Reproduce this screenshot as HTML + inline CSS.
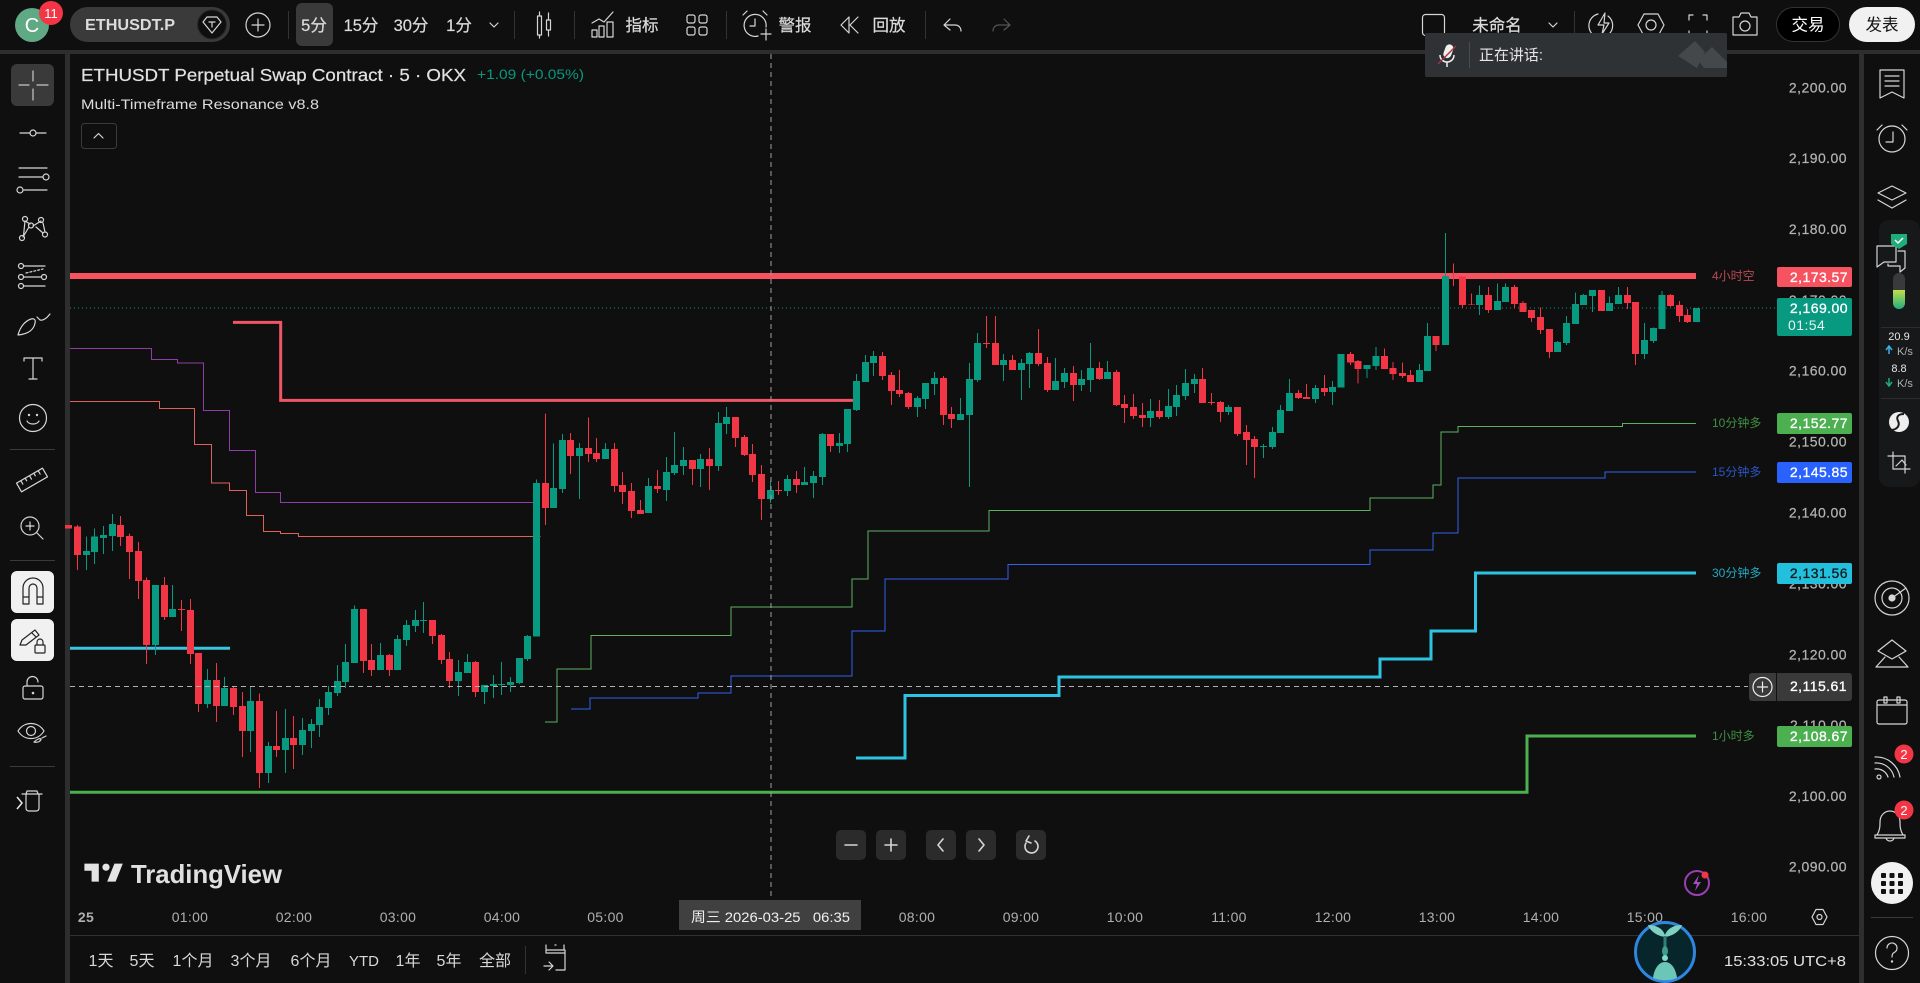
<!DOCTYPE html>
<html lang="zh"><head><meta charset="utf-8"><title>ETHUSDT</title>
<style>
html,body{margin:0;padding:0;background:#0f0f0f;overflow:hidden;width:1920px;height:983px}
svg{display:block;font-family:"Liberation Sans","Noto Sans CJK SC",sans-serif}
.ic{fill:none;stroke:#d6d6d6;stroke-width:1.2;stroke-linecap:round;stroke-linejoin:round}
.tb{fill:#dcdcdc;font-size:16.5px;text-anchor:middle;stroke:#dcdcdc;stroke-width:.2}
.pr{fill:#b4b4b4;font-size:14px;text-anchor:end;letter-spacing:.45px;stroke:#b4b4b4;stroke-width:.2}
.lb{fill:#fff;font-size:14px;text-anchor:end;letter-spacing:.45px;stroke:#fff;stroke-width:.3}
.tm{fill:#b0b0b0;font-size:14px;text-anchor:middle;letter-spacing:.3px}
.rg{fill:#d8d8d8;font-size:16px;text-anchor:middle}
.sm{font-size:12px}
.cr{shape-rendering:crispEdges}
</style></head><body>
<svg width="1920" height="983" viewBox="0 0 1920 983" xmlns="http://www.w3.org/2000/svg">
<rect width="1920" height="983" fill="#0f0f0f"/>
<!-- frame dividers -->
<rect x="0" y="50" width="1920" height="4" fill="#2e2e2e"/>
<rect x="65" y="54" width="5" height="929" fill="#2e2e2e"/>
<rect x="1859" y="54" width="5" height="929" fill="#2e2e2e"/>
<rect x="70" y="935" width="1789" height="1" fill="#303030"/>

<!-- indicator lines -->
<rect x="70" y="273" width="1626" height="6" fill="#f7525f"/>
<path class="cr" d="M70 308H1777" stroke="#089981" stroke-width="1" stroke-dasharray="1 3" fill="none"/>
<g transform="translate(70 310) scale(.33333)" fill="none">
<path class="cr" d="M0 116H244V149H322V159H400V301H478V421H556V547H632V577H1410" stroke="#8f3ea5" stroke-width="3"/>
<path class="cr" d="M0 274H268V295H373V403H424V519H478V541H529V616H580V664H632V670H686V679H1412" stroke="#e0605c" stroke-width="3"/>
<path d="M489 37H632V271H2349" stroke="#ee5565" stroke-width="9"/>
</g>
<g fill="none">
<path d="M70 648.3H230" stroke="#3cc3e0" stroke-width="3"/>
<path class="cr" d="M545 722H557V669H591V635.500H731V607H852V579H868V531H989V510.500H1370V498H1433V485H1441V432H1458V426.700H1622.500V423.300H1696" stroke="#5cb160" stroke-width="1"/>
<path class="cr" d="M571 709H590V698H698V693H731V676H852V631H885V579H1008V564.500H1370V550H1433V533H1458V478H1605V472H1696" stroke="#2f62ee" stroke-width="1"/>
<path d="M856 758H905V695.500H1059V677H1380V659H1431V631H1475.500V573H1696" stroke="#2cc4e0" stroke-width="3"/>
<path d="M70 792.300H1527V736H1696" stroke="#4caf50" stroke-width="3"/>
</g>

<!-- candles A -->
<g class="cr" transform="translate(70 480) scale(.33333)" fill="none">
<path stroke="#f23645" stroke-width="3" d="M22 135V270M151 108V198M178 160V297M205 186V357M230 292V552M284 291V420M334 360V453M361 357V552M385 519V696M439 549V726M490 620V705M517 636V831M568 640V924M620 693V831M670 708V867M880 387V579M904 492V588M958 522V588M1087 420V492M1114 462V552M1138 516V624M1216 543V651"/>
<path stroke="#f23645" stroke-width="21" d="M-5 135V145M22 140V225M151 135V171M178 168V216M205 213V303M230 300V495M284 315V411M334 387V390M361 390V522M385 519V672M439 600V678M490 624V681M517 678V753M568 663V879M620 798V810M670 774V795M880 387V543M904 540V570M958 525V570M1087 420V468M1114 465V540M1138 537V603M1216 546V636"/>
<path stroke="#089981" stroke-width="3" d="M49 170V270M74 145V252M100 138V222M127 102V213M257 315V525M307 315V411M412 567V684M463 591V678M541 618V816M595 786V909M646 687V879M697 714V825M724 717V804M748 657V771M775 618V705M802 555V648M826 492V624M853 376V549M931 489V570M982 465V570M1009 420V498M1036 390V456M1060 366V459M1165 540V648M1192 522V579M1243 615V672M1270 585V654M1294 546V645M1321 591V636M1348 534V612M1372 465V543"/>
<path stroke="#089981" stroke-width="21" d="M49 213V225M74 170V216M100 165V174M127 132V168M257 315V495M307 387V411M412 600V672M463 624V678M541 663V753M595 798V879M646 774V810M697 750V795M724 732V753M748 681V735M775 636V684M802 603V639M826 546V606M853 387V549M931 525V570M982 477V570M1009 435V480M1036 420V438M1060 420V423M1165 576V603M1192 546V579M1243 615V636M1270 612V618M1294 612V615M1321 606V615M1348 534V609M1372 468V537"/>
</g>
<!-- candles B -->
<g class="cr" transform="translate(530 400) scale(.33333)" fill="none">
<path stroke="#f23645" stroke-width="3" d="M46 40V375M121 99V222M175 52V186M200 114V186M253 129V276M278 216V312M305 249V354M332 300V342M382 210V279M487 180V255M538 144V270M616 51V141M643 105V168M667 132V246M694 195V360M745 243V285M799 213V279M902 102V156"/>
<path stroke="#f23645" stroke-width="21" d="M46 249V324M121 120V168M175 144V162M200 159V177M253 147V258M278 255V276M305 273V333M332 330V342M382 258V267M487 180V207M538 177V198M616 51V114M643 111V165M667 162V225M694 222V297M745 270V273M799 237V255M902 102V138"/>
<path stroke="#089981" stroke-width="3" d="M19 238V710M70 130V324M97 102V279M148 129V297M226 129V177M355 234V339M409 171V303M433 96V225M460 141V225M512 162V261M565 36V213M590 21V102M721 243V309M772 225V288M823 201V255M850 213V294M877 99V255M928 99V159"/>
<path stroke="#089981" stroke-width="21" d="M19 249V710M70 264V324M97 120V267M148 144V168M226 147V177M355 258V339M409 216V270M433 195V219M460 180V198M512 177V207M565 69V198M590 51V72M721 270V297M772 237V273M823 246V255M850 228V249M877 102V231M928 129V138"/>
</g>
<!-- candles C -->
<g class="cr" transform="translate(840 300) scale(.33333)" fill="none">
<path stroke="#f23645" stroke-width="3" d="M127 156V240M154 216V315M178 210V291M205 276V327M310 228V375M334 321V384M439 48V144M466 48V195M517 165V210M595 87V198M622 171V276M700 198V303M778 186V240M829 210V318M853 285V369M880 282V357M907 309V381M958 300V357M1087 204V309M1114 279V315M1141 303V366M1192 321V408M1219 375V495M1243 408V534M1375 270V297M1399 252V297M1453 225V288"/>
<path stroke="#f23645" stroke-width="21" d="M127 168V228M154 225V273M178 270V282M205 279V321M310 234V345M334 342V357M439 129V132M466 129V195M517 180V210M595 159V192M622 189V270M700 219V255M778 204V237M829 216V315M853 312V324M880 321V348M907 345V354M958 333V351M1087 237V309M1114 306V309M1141 306V336M1192 321V402M1219 396V420M1243 417V441M1375 279V294M1399 291V297M1453 264V276"/>
<path stroke="#089981" stroke-width="3" d="M22 327V456M49 222V333M76 165V246M100 153V228M232 288V351M256 249V327M283 216V285M361 294V360M388 189V561M412 99V246M490 162V243M544 177V300M568 156V264M646 174V270M673 204V264M724 210V273M751 129V276M802 183V237M931 297V381M985 267V357M1009 255V348M1036 207V300M1063 222V279M1165 315V345M1270 432V474M1297 381V447M1321 315V399M1348 237V333M1426 255V309M1477 243V315"/>
<path stroke="#089981" stroke-width="21" d="M22 327V432M49 243V330M76 186V246M100 168V189M232 294V321M256 249V297M283 234V252M361 342V360M388 237V345M412 129V240M490 180V195M544 189V210M568 159V192M646 243V270M673 219V246M724 237V255M751 204V240M802 216V237M931 333V354M985 318V351M1009 285V321M1036 249V288M1063 237V252M1165 321V336M1270 438V441M1297 396V441M1321 330V399M1348 279V333M1426 264V297M1477 261V276"/>
</g>
<!-- candles D -->
<g class="cr" transform="translate(1300 220) scale(.35714 .33333)" fill="none">
<path stroke="#f23645" stroke-width="2.800" d="M141 396V435M163 420V491M236 385V447M261 426V480M287 427V474M310 450V486M381 348V393M430 130V198M455 170V264M480 220V255M528 201V279M600 195V264M625 243V276M648 270V306M674 262V342M698 327V414M844 210V273M917 201V267M940 246V435M1037 222V261M1062 243V306M1085 267V309"/>
<path stroke="#f23645" stroke-width="19.600" d="M141 402V427M163 423V447M236 408V447M261 444V462M287 459V468M310 465V486M381 348V375M455 170V255M480 253V255M528 225V270M600 201V252M625 249V276M648 270V294M674 291V330M698 327V396M844 210V273M917 225V249M940 246V402M1037 225V258M1062 255V288M1085 285V306"/>
<path stroke="#089981" stroke-width="2.800" d="M115 402V503M188 435V474M213 381V450M334 432V486M357 309V453M407 39V375M503 197V285M553 190V270M575 190V246M721 363V396M746 288V375M771 217V312M794 222V255M819 210V276M867 230V273M892 201V252M964 309V417M990 322V369M1013 213V327M1110 264V306"/>
<path stroke="#089981" stroke-width="19.600" d="M115 402V503M188 435V447M213 408V438M334 450V486M357 348V453M407 168V375M503 225V255M553 243V270M575 201V246M721 366V396M746 309V369M771 252V312M794 225V255M819 210V228M867 249V273M892 225V252M964 360V402M990 324V363M1013 225V327M1110 264V306"/>
</g>

<!-- crosshair -->
<path class="cr" d="M771 54V898" stroke="#a0a0a0" stroke-width="1" stroke-dasharray="5 4" fill="none"/>
<path class="cr" d="M70 686.700H1748" stroke="#b0b0b0" stroke-width="1" stroke-dasharray="5 4" fill="none"/>

<!-- legend -->
<text x="81" y="81" font-size="17.500" fill="#e2e2e2" stroke="#e2e2e2" stroke-width=".2" textLength="385" lengthAdjust="spacingAndGlyphs">ETHUSDT Perpetual Swap Contract · 5 · OKX</text>
<text x="477" y="79" font-size="14" fill="#089981" textLength="107" lengthAdjust="spacingAndGlyphs">+1.09 (+0.05%)</text>
<text x="81" y="109" font-size="14" fill="#dcdcdc" textLength="238" lengthAdjust="spacingAndGlyphs">Multi-Timeframe Resonance v8.8</text>
<rect x="81.500" y="123.500" width="35" height="25" rx="3" fill="none" stroke="#3a3a3a"/>
<path d="M94 138l4.500-4.500l4.500 4.500" class="ic"/>

<!-- price axis -->
<g>
<text class="pr" x="1847" y="92.500">2,200.00</text>
<text class="pr" x="1847" y="163">2,190.00</text>
<text class="pr" x="1847" y="234">2,180.00</text>
<text class="pr" x="1847" y="305">2,170.00</text>
<text class="pr" x="1847" y="375.500">2,160.00</text>
<text class="pr" x="1847" y="446.500">2,150.00</text>
<text class="pr" x="1847" y="517.500">2,140.00</text>
<text class="pr" x="1847" y="588.500">2,130.00</text>
<text class="pr" x="1847" y="659.500">2,120.00</text>
<text class="pr" x="1847" y="730">2,110.00</text>
<text class="pr" x="1847" y="801">2,100.00</text>
<text class="pr" x="1847" y="871.500">2,090.00</text>
</g>
<!-- right side labels -->
<text class="sm" x="1712" y="280" fill="#b84a56">4小时空</text>
<text class="sm" x="1712" y="427" fill="#3f8f42">10分钟多</text>
<text class="sm" x="1712" y="476" fill="#2c54c4">15分钟多</text>
<text class="sm" x="1712" y="577" fill="#22a8c0">30分钟多</text>
<text class="sm" x="1712" y="740" fill="#3f8f42">1小时多</text>

<rect x="1777" y="267" width="75" height="20" rx="2" fill="#f7525f"/><text class="lb" x="1848" y="282">2,173.57</text>
<rect x="1777" y="298" width="75" height="38" rx="2" fill="#089981"/><text class="lb" x="1848" y="313">2,169.00</text><text x="1788" y="330" fill="#e6f5f0" font-size="14" letter-spacing=".45">01:54</text>
<rect x="1777" y="413" width="75" height="21" rx="2" fill="#4caf50"/><text class="lb" x="1848" y="428">2,152.77</text>
<rect x="1777" y="462" width="75" height="21" rx="2" fill="#2962ff"/><text class="lb" x="1848" y="477">2,145.85</text>
<rect x="1777" y="563" width="75" height="21" rx="2" fill="#22c0dd"/><text class="lb" x="1848" y="578" style="fill:#0f1a1e;stroke:#0f1a1e">2,131.56</text>
<rect x="1749" y="673" width="103" height="28" rx="3" fill="#3a3a3a"/><rect x="1776" y="673" width="1" height="28" fill="#111"/>
<text class="lb" x="1847" y="691">2,115.61</text>
<circle cx="1762.500" cy="687" r="9.500" class="ic" style="stroke:#eee"/><path d="M1762.500 682v10M1757.500 687h10" class="ic" style="stroke:#eee"/>
<rect x="1777" y="726" width="75" height="21" rx="2" fill="#4caf50"/><text class="lb" x="1848" y="741">2,108.67</text>

<!-- time axis -->
<text class="tm" x="86" y="922" style="font-weight:700">25</text>
<text class="tm" x="190" y="922">01:00</text><text class="tm" x="294" y="922">02:00</text><text class="tm" x="398" y="922">03:00</text><text class="tm" x="502" y="922">04:00</text><text class="tm" x="605.500" y="922">05:00</text>
<text class="tm" x="917" y="922">08:00</text><text class="tm" x="1021" y="922">09:00</text><text class="tm" x="1125" y="922">10:00</text><text class="tm" x="1229" y="922">11:00</text><text class="tm" x="1333" y="922">12:00</text><text class="tm" x="1437" y="922">13:00</text><text class="tm" x="1541" y="922">14:00</text><text class="tm" x="1645" y="922">15:00</text><text class="tm" x="1749" y="922">16:00</text>
<rect x="679" y="900" width="182" height="30" fill="#404040"/>
<text x="691" y="922" font-size="14" fill="#f0f0f0" textLength="159" lengthAdjust="spacingAndGlyphs" xml:space="preserve">周三 2026-03-25   06:35</text>
<path class="ic" d="M1812 917l4-7.500h7l4 7.500l-4 7.500h-7z"/><circle class="ic" cx="1819.500" cy="917" r="2.500"/>

<!-- zoom buttons -->
<g fill="#2b2b2b"><rect x="836" y="830" width="30" height="30" rx="5"/><rect x="876" y="830" width="30" height="30" rx="5"/><rect x="926" y="830" width="30" height="30" rx="5"/><rect x="966" y="830" width="30" height="30" rx="5"/><rect x="1016" y="830" width="30" height="30" rx="5"/></g>
<g class="ic" style="stroke-width:1.600"><path d="M845 845h12M885 845h12M891 839v12M943 839l-5 6l5 6M979 839l5 6l-5 6"/><path d="M1035 841a6.500 6.500 0 1 1-9 2M1029 836l-3 5l5 2"/></g>

<!-- TradingView logo -->
<g transform="translate(82 860) scale(1.200)" fill="#e4e4e4"><path d="M14 3H2v6h6v9h6V3z"/><path d="M28 18h-7l6-15h7l-6 15z"/><circle cx="20" cy="6" r="3"/></g>
<text x="131" y="883" font-size="26" font-weight="700" fill="#e0e0e0" textLength="151" lengthAdjust="spacingAndGlyphs">TradingView</text>

<!-- purple power -->
<circle cx="1697" cy="883" r="12" fill="none" stroke="#9a3fb5" stroke-width="2"/>
<path d="M1699 875l-6 9h4l-2 7l6-9h-4z" fill="#a44bc0"/>
<circle cx="1705" cy="875" r="3.500" fill="#f23645"/>

<!-- bottom bar -->
<g class="rg"><text x="101" y="966">1天</text><text x="142" y="966">5天</text><text x="193" y="966">1个月</text><text x="251" y="966">3个月</text><text x="311" y="966">6个月</text><text x="364" y="966" font-size="15">YTD</text><text x="408" y="966">1年</text><text x="449" y="966">5年</text><text x="495" y="966">全部</text></g>
<rect x="525" y="946" width="1" height="28" fill="#333"/>
<g class="ic"><path d="M546 953V950H565V970H556M546 949v-4M564 949v-4M555 945h1M546 953h19M544 966h8M549 962l4 4l-4 4"/></g>
<text x="1846" y="966" font-size="15" fill="#e0e0e0" text-anchor="end" textLength="122" lengthAdjust="spacingAndGlyphs">15:33:05 UTC+8</text>

<!-- bottom avatar -->
<circle cx="1665" cy="952" r="29.500" fill="#07262b" stroke="#2f86e0" stroke-width="3"/>
<path d="M1665 935c-3-8-11-10-17-10c2 6 9 11 17 12c8-1 15-6 17-12c-6 0-14 2-17 10z" fill="#7fcfc2"/>
<path d="M1665 936v22" stroke="#2f7f78" stroke-width="3"/>
<ellipse cx="1665" cy="951" rx="3" ry="5" fill="#3f9a90"/>
<circle cx="1665" cy="958" r="3" fill="#7fd8c8"/>
<path d="M1653 978c1-8 5-16 12-16s11 8 12 16c-8 3-16 3-24 0z" fill="#6cc6b8"/>

<!-- TOP BAR -->
<circle cx="32" cy="25" r="17" fill="#5fa985"/>
<text x="32" y="32" font-size="20" fill="#fff" text-anchor="middle">C</text>
<circle cx="51" cy="13" r="12" fill="#f23645"/>
<text x="51" y="18" font-size="13" fill="#fff" text-anchor="middle">11</text>
<rect x="70" y="7" width="160" height="35" rx="17.500" fill="#3a3a3a"/>
<text x="85" y="30" font-size="15.500" font-weight="700" fill="#dcdcdc" textLength="90" lengthAdjust="spacingAndGlyphs">ETHUSDT.P</text>
<circle cx="212" cy="24.500" r="14.500" fill="#0f0f0f" stroke="#2a2a2a"/>
<g transform="translate(212 25)" class="ic"><path d="M-9 -3l4-5h10l4 5l-9 11z"/><path d="M-3 -3h6M0 -3v5"/></g>
<circle cx="258" cy="25" r="12" class="ic"/><path class="ic" d="M258 19v12M252 25h12"/>
<g fill="#333"><rect x="288" y="11" width="1" height="28"/><rect x="514" y="11" width="1" height="28"/><rect x="574" y="11" width="1" height="28"/><rect x="726" y="11" width="1" height="28"/><rect x="925" y="11" width="1" height="28"/><rect x="1574" y="11" width="1" height="28"/></g>
<rect x="296" y="3" width="37" height="43" rx="6" fill="#3a3a3a"/>
<text class="tb" x="314" y="31">5分</text><text class="tb" x="361" y="31">15分</text><text class="tb" x="411" y="31">30分</text><text class="tb" x="459" y="31">1分</text>
<path class="ic" d="M490 23l4 4l4-4"/>
<g class="ic" transform="translate(544 25)"><rect x="-6.500" y="-9" width="4" height="19"/><rect x="2.500" y="-5" width="4" height="10"/><path d="M-4.500 -13v4M-4.500 10v3M4.500 -12v7M4.500 5v6"/></g>
<g class="ic" transform="translate(603 25)"><path d="M-11 -2l7-4l5 3l9-10"/><rect x="-11" y="5" width="5" height="7"/><rect x="-4" y="1" width="5" height="11"/><rect x="4" y="-3" width="6" height="15"/></g>
<text class="tb" x="642" y="31">指标</text>
<g class="ic"><rect x="687" y="15" width="8" height="8" rx="2"/><rect x="699" y="15" width="8" height="8" rx="2"/><rect x="687" y="27" width="8" height="8" rx="2"/><rect x="699" y="27" width="8" height="8" rx="2"/></g>
<g class="ic" transform="translate(755 25)"><path d="M3 11a11 11 0 1 1 8-9M0 -6v7h-5M-12 -10l4-4M8 -14l4 4M6 9h10M11 4v11"/></g>
<text class="tb" x="795" y="31">警报</text>
<g class="ic"><path d="M849 17l-8 8l8 8zM858 17l-8 8l8 8"/></g>
<text class="tb" x="889" y="31">回放</text>
<path class="ic" d="M950 19l-6 6l6 5M944 25h11c4 0 6 3 6 6"/>
<path class="ic" style="stroke:#555" d="M1004 19l6 6l-6 5M1010 25h-11c-4 0-6 3-6 6"/>
<rect x="1422.500" y="14.500" width="22" height="21" rx="3" class="ic"/>
<text class="tb" x="1497" y="31">未命名</text>
<path class="ic" d="M1549 23l4 4l4-4"/>
<g class="ic" transform="translate(1602 25)"><path d="M-4 -11a12 12 0 0 0-1 23M6 -9a12 12 0 0 1 0 19M3 -12l-7 12h6l-2 9l7-11h-5z"/></g>
<g class="ic" transform="translate(1651 25)"><path d="M-13 0l6-11h14l6 11l-6 11h-14z"/><circle r="5"/></g>
<g class="ic"><path d="M1689 20v-5h4M1703 15h4v5M1707 31v5h-4M1693 36h-4v-5"/></g>
<g class="ic" transform="translate(1745 25)"><path d="M-12 -8h6l2-4h8l2 4h6v18h-24z"/><circle cy="1" r="5"/></g>
<rect x="1776.500" y="7.500" width="63" height="34" rx="17" fill="#000" stroke="#333"/>
<text x="1808" y="30.500" font-size="16.500" fill="#fff" text-anchor="middle">交易</text>
<rect x="1849" y="7" width="66" height="35" rx="17.500" fill="#f1f1f1"/>
<text x="1882" y="30.500" font-size="16.500" fill="#111" text-anchor="middle">发表</text>

<!-- popup -->
<rect x="1425" y="33" width="302" height="44" rx="2" fill="#2f3235"/>
<g transform="translate(1447 55)"><rect x="-4" y="-11" width="8" height="14" rx="4" fill="#f0f0f0" transform="rotate(20)"/><path d="M-7 0c0 5 4 7 7 7s7-2 7-7M0 7v5" fill="none" stroke="#f0f0f0" stroke-width="1.500"/><path d="M-9 9L9 -9" stroke="#a8323a" stroke-width="1.300"/></g>
<rect x="1469" y="42" width="1" height="26" fill="#4a4d50"/>
<text x="1479" y="60" font-size="15" fill="#e6e6e6" textLength="64" lengthAdjust="spacingAndGlyphs">正在讲话:</text>
<path d="M1678 56L1695 41L1705 52L1697 68ZM1698 60L1712 47L1727 62V68H1704Z" fill="#45484b"/>

<!-- LEFT TOOLBAR -->
<rect x="11" y="64" width="43" height="42" rx="6" fill="#3a3a3a"/>
<path class="ic" style="stroke:#c8c8c8" d="M33 71v10M33 89v11M19 85h10M37 85h11"/>
<g class="ic">
<g transform="translate(33 133)"><path d="M-13 0h10M3 0h10"/><circle r="3"/></g>
<g transform="translate(33 179)"><path d="M-14 -11H14M-14 -2H10M-9 11H14"/><circle cx="13" cy="-2" r="3"/><circle cx="-13" cy="11" r="3"/></g>
<g transform="translate(33 227)"><path d="M-9.500 9L-8 -6M-8 -6L-3 -3M-10 10L-4 0M0 -1L8 -6M10 -4L12 5M3 0L10 6"/><circle cx="-11" cy="11" r="2.500"/><circle cx="-8" cy="-8" r="2.500"/><circle cx="-2" cy="-1.500" r="2.500"/><circle cx="8" cy="-7" r="2.500"/><circle cx="12" cy="7.500" r="2.500"/></g>
<g transform="translate(33 275)"><path d="M-9 -9H12M-9 2H8M-9 11H12"/><path d="M-7 -2L10 -6" stroke-dasharray="2 2"/><circle cx="-12" cy="-9" r="2.500"/><circle cx="-12" cy="2" r="2.500"/><circle cx="-12" cy="11" r="2.500"/><circle cx="11" cy="2" r="2.500"/></g>
<g transform="translate(33 323)"><path d="M-15 12c2-8 7-14 13-16c3-1 5 1 4 4c-1 6-6 11-17 12zM4 -6l3 3c3 1 7-2 10-6"/></g>
<g transform="translate(33 368)"><path d="M-9 -7V-10H9V-7M0 -10V11M-4 11H4"/></g>
<g transform="translate(33 418)"><circle r="13.500"/><path d="M-6 3c2 4 10 4 12 0"/><circle cx="-4" cy="-3" r=".6"/><circle cx="4" cy="-3" r=".6"/></g>
</g>
<rect x="10" y="449" width="45" height="1" fill="#3a3a3a"/>
<g class="ic">
<g transform="translate(32 480) rotate(-30)"><rect x="-15" y="-5" width="30" height="10"/><path d="M-10 -5v4M-5 -5v3M0 -5v4M5 -5v3M10 -5v4"/></g>
<g transform="translate(33 527)"><circle cx="-3" cy="-1" r="9"/><path d="M-3 -5v8M-7 -1h8M4 6l6 6"/></g>
</g>
<rect x="10" y="560" width="45" height="1" fill="#3a3a3a"/>
<rect x="11" y="571" width="43" height="42" rx="6" fill="#f1f1f1"/>
<g class="ic" style="stroke:#222"><path d="M23 604V588a10 10 0 0 1 20 0V604H37V588a4 4 0 0 0-8 0V604zM23 597h6M37 597h6"/></g>
<rect x="11" y="619" width="43" height="42" rx="6" fill="#f1f1f1"/>
<g class="ic" style="stroke:#222"><path d="M20 645l2-5l13-10l4 5l-13 10z"/><path d="M32 633l4 4"/><rect x="35" y="645" width="10" height="8" rx="1"/><path d="M37 645v-3a3 3 0 0 1 6 0v3"/></g>
<g class="ic"><rect x="23" y="686" width="20" height="13" rx="2"/><path d="M27 686v-4a5.500 5.500 0 0 1 11 0"/></g>
<circle cx="33" cy="693" r="1.300" fill="#d6d6d6"/>
<g class="ic" transform="translate(31 731)"><path d="M-13 0c6-10 20-10 26 0c-6 10-20 10-26 0z"/><circle r="4.500"/><path d="M3 11c3-3 6-4 7-3c0 2-3 4-7 3M11 7l4-2"/></g>
<rect x="10" y="766" width="45" height="1" fill="#3a3a3a"/>
<path class="ic" d="M22 794h20M26 794l1-3h10l1 3M26 794v14c0 2 1 3 3 3h7c2 0 3-1 3-3V794"/>
<path d="M17 797l5 6l-5 6" fill="none" stroke="#e8e8e8" stroke-width="1.500"/>

<!-- RIGHT TOOLBAR -->
<rect x="1879" y="220" width="41" height="267" rx="10" fill="#17181a"/>
<g class="ic">
<g transform="translate(1892 84)"><path d="M-12 -14H12V14L0 8L-12 14ZM-7 -8H7M-7 -3H7M-7 2H7"/></g>
<g transform="translate(1892 139)"><circle r="13"/><path d="M1 -7V3H-6M-15 -9L-10 -14M10 -14L15 -9"/></g>
<g transform="translate(1892 197)"><path d="M-14 -4L0 -11L14 -4L0 3ZM-14 3L0 11L14 3"/></g>
<g transform="translate(1890 258)"><path d="M-13 -12H6V4H-6L-13 9ZM8 -7H15V10L10 14V8H-2V6"/></g>
</g>
<path d="M1891 234h16v10l-8 5l-8-5z" fill="#1fae7a"/><path d="M1895 240l3 3l5-5" fill="none" stroke="#fff" stroke-width="1.500"/>
<defs><linearGradient id="bat" x1="0" y1="0" x2="0" y2="1"><stop offset="0" stop-color="#c3dc4a"/><stop offset="1" stop-color="#20ad80"/></linearGradient></defs>
<rect x="1893" y="273" width="12" height="36" rx="6" fill="#3a3a3a"/><path d="M1893 290h12v13a6 6 0 0 1-12 0z" fill="url(#bat)"/>
<rect x="1881" y="327" width="39" height="1" fill="#2c2c2e"/>
<text x="1899" y="340" font-size="11" fill="#e6e6e6" text-anchor="middle">20.9</text>
<path d="M1889 346v8M1886 350l3-4l3 4" fill="none" stroke="#38b0e8" stroke-width="1.500"/>
<text x="1897" y="355" font-size="11" fill="#b0b0b0">K/s</text>
<text x="1899" y="372" font-size="11" fill="#e6e6e6" text-anchor="middle">8.8</text>
<path d="M1889 378v8M1886 382l3 4l3-4" fill="none" stroke="#1fae7a" stroke-width="1.500"/>
<text x="1897" y="387" font-size="11" fill="#b0b0b0">K/s</text>
<rect x="1881" y="398" width="39" height="1" fill="#2c2c2e"/>
<ellipse cx="1899" cy="422" rx="10" ry="10" fill="#eee"/><path d="M1904 414c-6 0-8 3-6 7s0 8-6 9" fill="none" stroke="#1a1b1d" stroke-width="2"/>
<g class="ic"><path d="M1893 452v17h17M1888 456h17v17M1896 466l6-6l4 5"/></g>
<g class="ic">
<g transform="translate(1892 598)"><circle r="17"/><circle r="10"/><path d="M0 0L14 -10"/></g>
<circle cx="1892" cy="598" r="3" fill="#d6d6d6"/>
<g transform="translate(1892 654)"><path d="M-14 -3L0 -14L14 -3L0 5ZM-16 13L-7 3M7 3L16 13ZM-16 13H16"/></g>
<g transform="translate(1892 711)"><rect x="-15" y="-11" width="30" height="24" rx="2"/><rect x="-8" y="-14" width="3" height="6"/><rect x="5" y="-14" width="3" height="6"/><path d="M-15 -6H15"/></g>
<g transform="translate(1888 767)"><circle cx="-9" cy="10" r="2"/><path d="M-13 2a12 12 0 0 1 13 8M-13 -4a18 18 0 0 1 19 14M-13 -10a24 24 0 0 1 25 20"/></g>
<g transform="translate(1890 825)"><path d="M-13 10C-10 5 -10 1 -10 -3C-10 -10 -5 -14 0 -14C5 -14 10 -10 10 -3C10 1 10 5 13 10ZM-15 10H15V13H-15ZM-4 13C-3 17 3 17 4 13"/></g>
</g>
<circle cx="1904" cy="754" r="9.500" fill="#f23645"/><text x="1904" y="759" font-size="13" fill="#fff" text-anchor="middle">2</text>
<circle cx="1904" cy="810" r="9.500" fill="#f23645"/><text x="1904" y="815" font-size="13" fill="#fff" text-anchor="middle">2</text>
<circle cx="1892" cy="883" r="21" fill="#f1f1f1"/>
<g fill="#111"><rect x="1881" y="873" width="5" height="5" rx="1"/><rect x="1889.500" y="873" width="5" height="5" rx="1"/><rect x="1898" y="873" width="5" height="5" rx="1"/><rect x="1881" y="881" width="5" height="5" rx="1"/><rect x="1889.500" y="881" width="5" height="5" rx="1"/><rect x="1898" y="881" width="5" height="5" rx="1"/><rect x="1881" y="889" width="5" height="5" rx="1"/><rect x="1889.500" y="889" width="5" height="5" rx="1"/><rect x="1898" y="889" width="5" height="5" rx="1"/></g>
<rect x="1871" y="917" width="42" height="1" fill="#3a3a3a"/>
<g class="ic"><circle cx="1892" cy="953" r="16.500"/><path d="M1887 948a5 5 0 1 1 8 4c-2 1-3 2-3 5"/></g>
<circle cx="1892" cy="961.500" r="1.200" fill="#d6d6d6"/>
</svg>
</body></html>
